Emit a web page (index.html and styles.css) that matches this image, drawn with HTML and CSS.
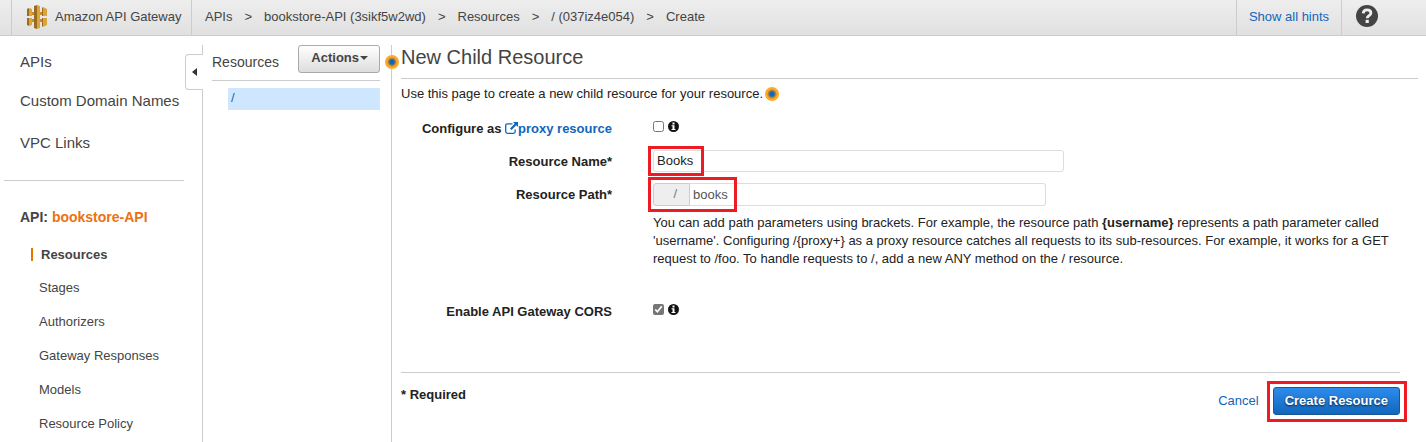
FILE: index.html
```html
<!DOCTYPE html>
<html lang="en">
<head>
<meta charset="utf-8">
<title>Amazon API Gateway</title>
<link rel="stylesheet" href="styles.css">
</head>
<body>
<header class="topbar">
  <a class="brand" href="#">
    <svg class="brand-logo" width="20" height="24" viewBox="0 0 20 24" aria-hidden="true">
      <path fill="#9d6b1f" d="M0 4l2-1v8H0zM0 13h2v8l-2-1zM7 1l3-1v24l-3-1zM15 3l1-1v9h-1zM15 13h1v9l-1-1z"/>
      <path fill="#dba53a" d="M2 3l3 1v7H2zM2 13h3v7l-3 1zM10 0l3 1v22l-3 1zM16 2l4 2v7h-4zM16 13h4v7l-4 2z"/>
      <path fill="#c18d2d" d="M5 7h2v3H5zM5 14h2v3H5zM13 7h2v3h-2zM13 14h2v3h-2z"/>
    </svg>
    <span>Amazon API Gateway</span>
  </a>
  <nav class="crumbs" aria-label="Breadcrumb">
    <a href="#">APIs</a><span>&gt;</span><a href="#">bookstore-API (3sikf5w2wd)</a><span>&gt;</span><a href="#">Resources</a><span>&gt;</span><a href="#">/ (037iz4e054)</a><span>&gt;</span><a href="#">Create</a>
  </nav>
  <a class="hints" href="#">Show all hints</a>
  <button class="help" type="button" aria-label="Help">
    <svg width="22" height="22" viewBox="0 0 22 22" aria-hidden="true">
      <circle cx="11" cy="11" r="11" fill="#444"/>
      <path d="M7.200 8.300C7.400 5.800 8.900 4.800 11 4.800c2.300 0 3.900 1.200 3.900 3.100 0 2.700-3.700 2.700-3.700 5.300" fill="none" stroke="#eee" stroke-width="2.800"/>
      <path d="M9.600 14.800h3.200v3.200H9.600z" fill="#eee"/>
    </svg>
  </button>
</header>

<div class="layout">
  <aside class="sidebar">
    <button class="collapse" type="button" aria-label="Collapse navigation">
      <svg width="5" height="8" viewBox="0 0 5 8" aria-hidden="true"><path d="M5 0v8L0 4z" fill="#333"/></svg>
    </button>
    <nav class="primary">
      <a href="#">APIs</a>
      <a href="#">Custom Domain Names</a>
      <a href="#">VPC Links</a>
    </nav>
    <div class="api-name">API: <a href="#">bookstore-API</a></div>
    <nav class="secondary">
      <a class="current" href="#">Resources</a>
      <a href="#">Stages</a>
      <a href="#">Authorizers</a>
      <a href="#">Gateway Responses</a>
      <a href="#">Models</a>
      <a href="#">Resource Policy</a>
    </nav>
  </aside>

  <section class="tree">
    <div class="tree-head">
      <span>Resources</span>
      <button class="actions" type="button">Actions<i class="caret"></i></button>
    </div>
    <a class="tree-item" href="#">/</a>
    <i class="hint hint-edge"></i>
  </section>

  <main class="content">
    <h1>New Child Resource</h1>
    <p class="intro">Use this page to create a new child resource for your resource.<i class="hint"></i></p>
    <form class="form">
      <div class="row row-check">
        <label class="label" for="proxy">Configure as <a href="#"><svg width="13" height="12" viewBox="0 0 13 12" aria-hidden="true"><path d="M7.500 1.800H2.500Q.700 1.800.700 3.600v6q0 1.700 1.800 1.700h6q1.700 0 1.700-1.700V7.500" fill="none" stroke="#1166bb" stroke-width="1.300"/><path d="M8 0h5v5l-1.700-1.700L6.500 8 5 6.500l4.700-4.800z" fill="#1166bb"/></svg>proxy resource</a></label>
        <div class="checks">
          <input class="check" type="checkbox" id="proxy">
          <svg width="11" height="11" viewBox="0 0 11 11" aria-hidden="true"><circle cx="5.500" cy="5.500" r="5.500" fill="#111"/><path d="M4.500 1.500h2v2h-2zM3.500 4.300h3v3.700h1v1h-4V8h1V5.300h-1z" fill="#fff"/></svg>
        </div>
      </div>
      <div class="row">
        <label class="label" for="name">Resource Name*</label>
        <div class="field field-name">
          <input class="text" type="text" id="name" value="Books">
          <i class="mark mark-name"></i>
        </div>
      </div>
      <div class="row">
        <label class="label" for="path">Resource Path*</label>
        <div class="field field-path">
          <span class="prefix">/</span>
          <input class="text text-path" type="text" id="path" value="books">
          <i class="mark mark-path"></i>
        </div>
      </div>
      <p class="note">You can add path parameters using brackets. For example, the resource path <b>{username}</b> represents a path parameter called 'username'. Configuring /{proxy+} as a proxy resource catches all requests to its sub-resources. For example, it works for a GET request to /foo. To handle requests to /, add a new ANY method on the / resource.</p>
      <div class="row row-check">
        <label class="label" for="cors">Enable API Gateway CORS</label>
        <div class="checks">
          <input class="check" type="checkbox" id="cors" checked>
          <svg width="11" height="11" viewBox="0 0 11 11" aria-hidden="true"><circle cx="5.500" cy="5.500" r="5.500" fill="#111"/><path d="M4.500 1.500h2v2h-2zM3.500 4.300h3v3.700h1v1h-4V8h1V5.300h-1z" fill="#fff"/></svg>
        </div>
      </div>
      <div class="footer">
        <span class="required">* Required</span>
        <a class="cancel" href="#">Cancel</a>
        <div class="submit">
          <button class="create" type="submit">Create Resource</button>
          <i class="mark mark-create"></i>
        </div>
      </div>
    </form>
  </main>
</div>
</body>
</html>
```

FILE: styles.css
```css
* { box-sizing: border-box; }

body {
  margin: 0;
  min-height: 100vh;
  display: flex;
  flex-direction: column;
  background: #fff;
  color: #222;
  font: 13px/18px "Liberation Sans", Arial, sans-serif;
}

a { color: inherit; text-decoration: none; }
button { font: inherit; cursor: pointer; }
h1, p { margin: 0; }
svg { display: block; flex: none; }

/* Top bar */
.topbar {
  display: flex;
  height: 36px;
  padding-left: 11px;
  border-bottom: 1px solid #ccc;
  background: linear-gradient(#eee, #e0e0e0);
  color: #444;
  line-height: 33px;
}
.brand {
  display: flex;
  gap: 8px;
  width: 181px;
  padding-left: 15px;
  border: solid #ccc;
  border-width: 0 1px;
  white-space: nowrap;
}
.brand-logo { margin-top: 5px; }
.crumbs {
  display: flex;
  flex: 1;
  gap: 12px;
  padding-left: 13px;
  white-space: nowrap;
}
.hints {
  width: 106px;
  border: solid #ccc;
  border-width: 0 1px;
  color: #16b;
  text-align: center;
}
.help {
  width: 84px;
  padding: 5px 14px 0;
  border: 0;
  background: none;
}
.help svg { margin-bottom: 8px; }

/* Columns */
.layout {
  display: flex;
  flex: 1;
  padding-top: 9px;
}
.sidebar {
  position: relative;
  flex: none;
  width: 203px;
  border-right: 1px solid #ccc;
  color: #444;
}
.collapse {
  position: absolute;
  top: 9px;
  right: -1px;
  display: flex;
  align-items: center;
  width: 18px;
  height: 36px;
  padding: 0 0 0 6px;
  border: 1px solid #ccc;
  border-right: 0;
  border-radius: 4px 0 0 4px;
  background: #fff;
}
.primary {
  display: flex;
  flex-direction: column;
  gap: 2px;
  margin: 0 18px 0 4px;
  padding: 0 0 17px 16px;
  border-bottom: 1px solid #ccc;
  font-size: 15px;
  line-height: 40px;
}
.primary a:first-child { line-height: 34px; }
.api-name {
  padding: 27px 0 11px 20px;
  font-size: 14px;
  font-weight: bold;
}
.api-name a { color: #ec7211; }
.secondary {
  display: flex;
  flex-direction: column;
  padding-left: 39px;
  line-height: 34px;
}
.secondary .current {
  margin: 11px 0 10px -8px;
  padding-left: 8px;
  border-left: 2px solid #e07700;
  font-weight: bold;
  line-height: 13px;
}

/* Resource tree */
.tree {
  position: relative;
  flex: none;
  width: 189px;
  padding: 0 11px 0 9px;
  border-right: 1px solid #ccc;
  color: #444;
}
.tree-head {
  display: flex;
  justify-content: space-between;
  height: 36px;
  border-bottom: 1px solid #ccc;
  font-size: 14px;
  line-height: 34px;
}
.actions {
  display: flex;
  align-items: center;
  gap: 1px;
  height: 28px;
  padding: 0 11px 2px 12px;
  border: 1px solid #aaa;
  border-radius: 3px;
  background: linear-gradient(#fff, #ddd);
  color: #444;
  font-size: 13px;
  font-weight: bold;
}
.caret {
  border: 4px solid transparent;
  border-top-color: #444;
  border-bottom: 0;
}
.tree-item {
  display: block;
  margin: 7px 0 0 16px;
  padding: 1px 3px 3px;
  background: #cfe6ff;
  color: #16b;
}
.hint {
  display: inline-block;
  width: 14px;
  height: 14px;
  border-radius: 50%;
  background: radial-gradient(#16b 2px, #d08a30 4px, #fa2 5px);
}
.hint-edge {
  position: absolute;
  top: 10px;
  right: -8px;
}

/* Form page */
.content {
  flex: 1;
  padding: 0 8px 0 9px;
}
.content h1 {
  height: 34px;
  border-bottom: 1px solid #ccc;
  color: #444;
  font-size: 20px;
  font-weight: normal;
  line-height: 24px;
}
.intro {
  display: flex;
  align-items: center;
  gap: 2px;
  padding-top: 6px;
}
.form { padding: 17px 18px 0 0; }
.row {
  display: grid;
  grid-template-columns: 211px 1fr;
  gap: 41px;
  margin-bottom: 10px;
}
.row-check { margin-bottom: 12px; }
.label {
  font-weight: bold;
  line-height: 23px;
  text-align: right;
}
.row-check .label { line-height: 18px; }
.label a { color: #16b; }
.label svg { display: inline-block; vertical-align: -1px; }
.checks {
  display: flex;
  align-items: center;
  gap: 4px;
  height: 12px;
}
.check {
  width: 11px;
  height: 11px;
  margin: 0;
  accent-color: #767676;
}
.field {
  position: relative;
  display: flex;
  height: 22px;
}
.field-name { max-width: 411px; }
.field-path { max-width: 393px; height: 23px; }
.text {
  flex: 1;
  min-width: 0;
  padding: 0 3px;
  border: 1px solid #ddd;
  border-radius: 3px;
  background: #fff;
  color: #222;
  font: inherit;
}
.text-path {
  border-left: 0;
  border-radius: 0 3px 3px 0;
  color: #555;
}
.prefix {
  width: 37px;
  padding-right: 12px;
  border: 1px solid #ccc;
  border-radius: 3px 0 0 3px;
  background: #eee;
  color: #777;
  line-height: 20px;
  text-align: right;
}
.row + .note {
  margin: -2px 0 35px 252px;
  line-height: 18px;
}
.footer {
  display: flex;
  align-items: flex-start;
  gap: 14px;
  margin-top: 51px;
  padding-top: 14px;
  border-top: 1px solid #ccc;
}
.required {
  flex: 1;
  font-weight: bold;
  line-height: 16px;
}
.cancel { color: #16b; line-height: 28px; }
.submit { position: relative; }
.create {
  height: 28px;
  padding: 0 11px;
  border: 1px solid #1a5796;
  border-radius: 3px;
  background: linear-gradient(#2d8cec, #16b);
  color: #fff;
  font-weight: bold;
  text-shadow: 0 1px 2px #024;
}

/* Red callouts drawn over the controls */
.mark {
  position: absolute;
  border: 3px solid #ed1c24;
  pointer-events: none;
}
.mark-name { top: -4px; left: -5px; width: 56px; height: 30px; }
.mark-path { top: -6px; left: -5px; width: 89px; height: 35px; }
.mark-create { inset: -6px -7px -7px -6px; }
```
